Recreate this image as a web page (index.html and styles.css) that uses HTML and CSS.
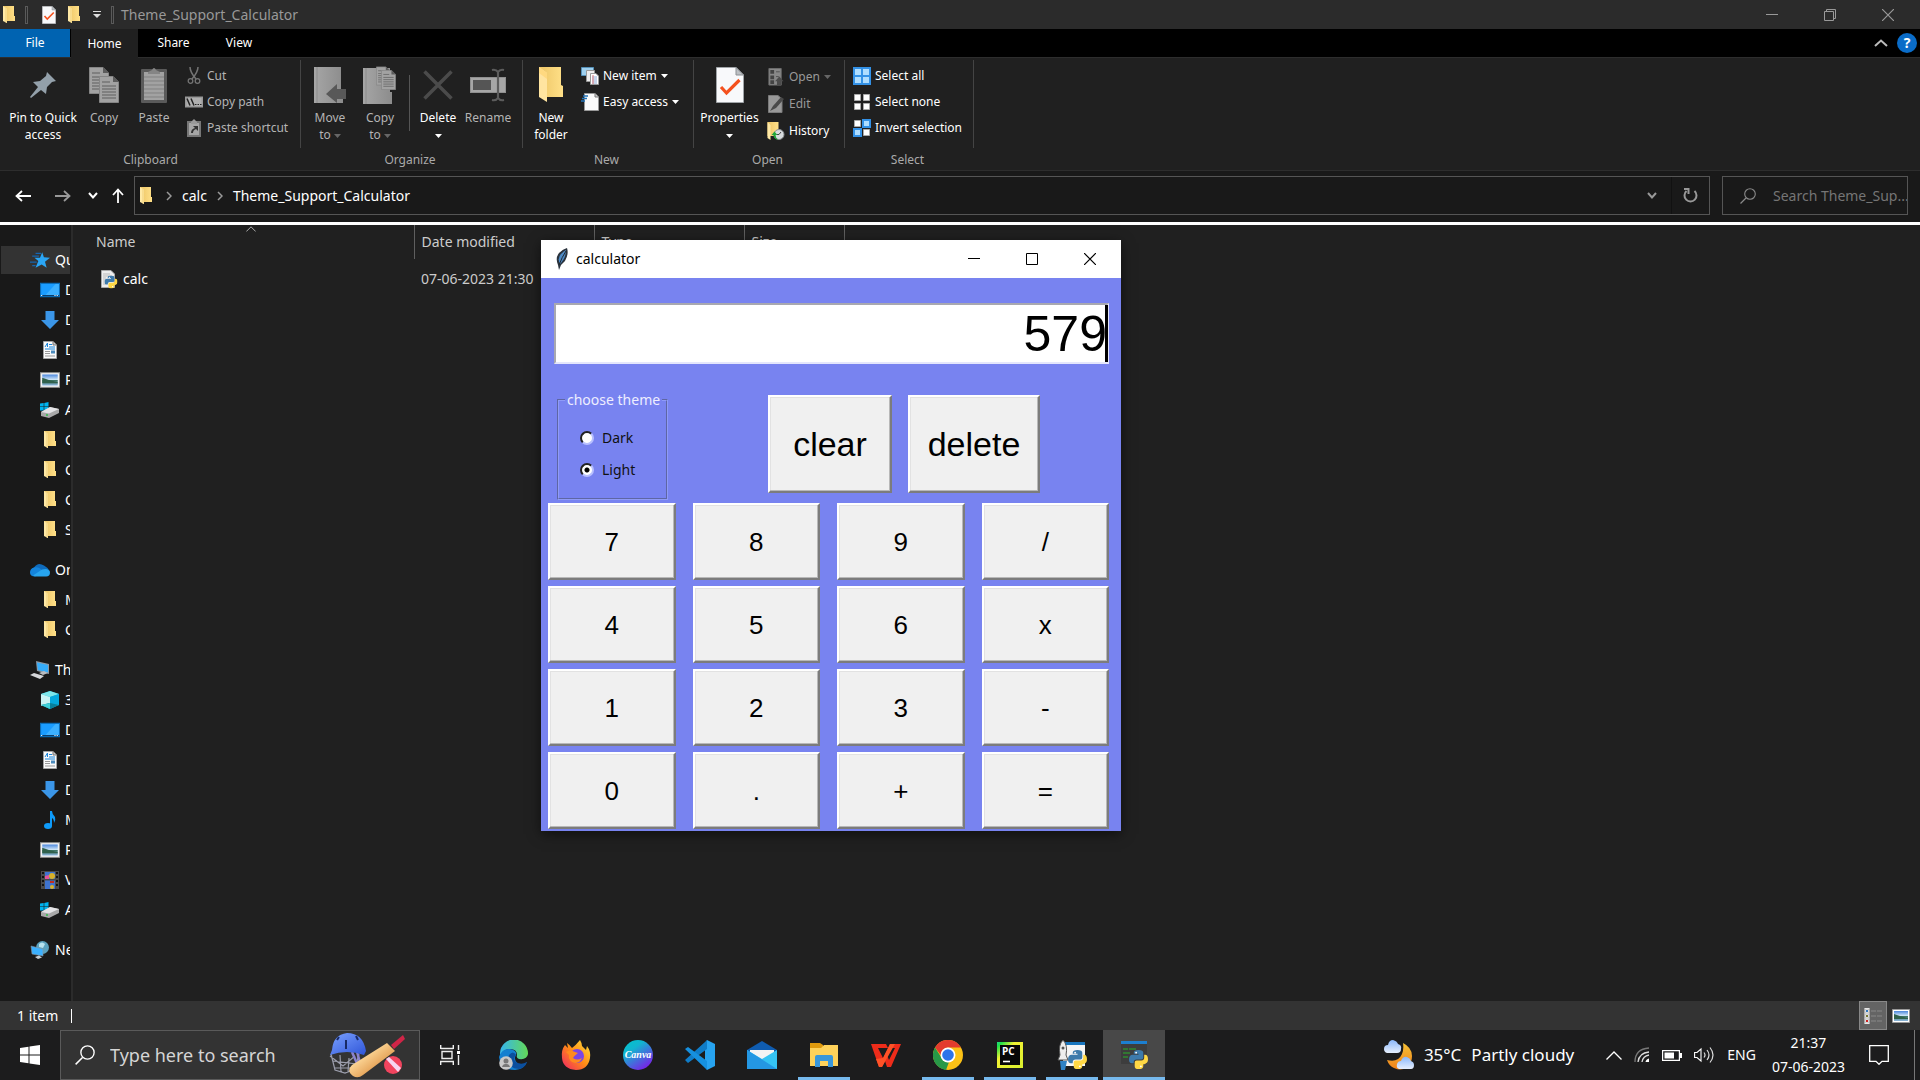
FILE: index.html
```html
<!DOCTYPE html>
<html lang="en">
<head>
<meta charset="utf-8">
<title>Theme_Support_Calculator</title>
<link rel="stylesheet" href="styles.css">
</head>
<body>
<svg class="sprite" aria-hidden="true">
  <defs>
    <linearGradient id="g-folder" x1="0" x2="1"><stop offset="0" stop-color="#edc566"/><stop offset="1" stop-color="#ffe088"/></linearGradient>
    <linearGradient id="g-sky" x1="0" y1="0" x2="0" y2="1"><stop offset="0" stop-color="#4a86dc"/><stop offset=".5" stop-color="#d8ecfa"/><stop offset=".5" stop-color="#37705c"/><stop offset="1" stop-color="#8fb8e0"/></linearGradient>
    <linearGradient id="g-grey" x1="0" x2="1"><stop offset="0" stop-color="#a6a6a6"/><stop offset="1" stop-color="#8c8c8c"/></linearGradient>
    <linearGradient id="g-canva" x1="0" y1="0" x2=".7" y2="1"><stop offset="0" stop-color="#00c4cc"/><stop offset=".35" stop-color="#11b5d0"/><stop offset="1" stop-color="#7a20e8"/></linearGradient>
    <linearGradient id="g-edge" x1="0" y1="0" x2="1" y2="0"><stop offset="0" stop-color="#35b5ef"/><stop offset="1" stop-color="#63d957"/></linearGradient>
    <linearGradient id="g-fox" x1="1" y1="0" x2="0" y2="1"><stop offset="0" stop-color="#ffe53c"/><stop offset=".5" stop-color="#ff8a16"/><stop offset="1" stop-color="#ef1e6b"/></linearGradient>
    <linearGradient id="g-moon" x1="0" y1="0" x2="0" y2="1"><stop offset="0" stop-color="#f6c237"/><stop offset="1" stop-color="#f08018"/></linearGradient>
    <linearGradient id="g-cloud" x1="0" y1="0" x2="0" y2="1"><stop offset="0" stop-color="#8bb8fb"/><stop offset="1" stop-color="#e6effd"/></linearGradient>
    <linearGradient id="g-pc" x1="0" y1="0" x2="1" y2="1"><stop offset="0" stop-color="#21d789"/><stop offset=".1" stop-color="#1ee04a"/><stop offset=".35" stop-color="#f2f233"/><stop offset="1" stop-color="#d8ef2f"/></linearGradient>
    <linearGradient id="g-helm" x1="0" y1="0" x2="1" y2="1"><stop offset="0" stop-color="#7ba2ff"/><stop offset="1" stop-color="#2f55d8"/></linearGradient>
    <linearGradient id="g-bat" x1="0" y1="0" x2="1" y2="1"><stop offset=".3" stop-color="#ffdc9e"/><stop offset=".8" stop-color="#d98a3a"/></linearGradient>
  </defs>
  <symbol id="folder" viewBox="0 0 12 18"><path d="M0 0H11V10H12V15H0Z" fill="url(#g-folder)"/><path d="M0 0L4 3V17L0 15Z" fill="#ffe9a6"/><path d="M2 1L4 3V17L2 16Z" fill="#f8dc8e"/></symbol>
  <symbol id="bigfolder" viewBox="0 0 24 36"><path d="M0 0H22V18L24 19V30H6Z" fill="url(#g-folder)"/><path d="M0 0L8 6V35L0 30Z" fill="#ffe4a0"/><path d="M0 0L8 6V12L0 6Z" fill="#ffd980"/></symbol>
  <symbol id="checkdoc" viewBox="0 0 28 36"><path d="M.5.5H20L27.500 8V35.500H.5Z" fill="#f8f9fb" stroke="#a0a4a8"/><path d="M20 .5V8H27.500Z" fill="#bcc0c4" stroke="#8c9094"/><path d="M5 20L10.500 26L23.500 13" fill="none" stroke="#f4511e" stroke-width="3.200"/></symbol>
  <symbol id="docgrey" viewBox="0 0 20 27"><path d="M.5.5H14L19.500 6V26.500H.5Z" fill="#a2a2a2" stroke="#858585"/><path d="M14 0V6H20" fill="#5c5c5c"/><path d="M3 6H11M3 10H17M3 13H17M3 16H17M3 19H17M3 22H17" stroke="#5f5f5f"/></symbol>
  <symbol id="copy" viewBox="0 0 30 36"><use href="#docgrey" width="20" height="27"/><use href="#docgrey" x="10" y="9" width="20" height="27"/></symbol>
  <symbol id="paste" viewBox="0 0 26 36"><rect y="2" width="26" height="34" rx="1" fill="#5a5a5a"/><path d="M3 5H23V33H3Z" fill="#a2a2a2"/><path d="M7 5L11 3Q13-1 15 3L19 5V7H7Z" fill="#858585"/><path d="M3 10H23M3 14H23M3 18H23M3 22H23M3 26H23M3 30H23" stroke="#818181"/></symbol>
  <symbol id="pin" viewBox="0 0 26 26"><path d="M17 0L26 9L22 10L17 15L16 22L11 18L1 26L0 25L8 15L3 10L10 9L16 4Z" fill="#93a0aa"/></symbol>
  <symbol id="cut" viewBox="0 0 14 18"><path d="M3 0Q3 5 9 12M11 0Q11 5 5 12" fill="none" stroke="#747474" stroke-width="1.500"/><circle cx="3.500" cy="14" r="2.300" fill="none" stroke="#747474" stroke-width="1.300"/><circle cx="10.500" cy="14" r="2.300" fill="none" stroke="#747474" stroke-width="1.300"/></symbol>
  <symbol id="path" viewBox="0 0 18 11"><path d="M0 0H18V11H0Z" fill="#999"/><path d="M1.500 1.500H16.500V9.500H1.500Z" fill="#b0b0b0"/><path d="M2 2L5 9M6 2L9 9" stroke="#222" stroke-width="1.500"/><path d="M10 8H11.500M12.500 8H14M15 8H16.500" stroke="#222"/></symbol>
  <symbol id="shortcut" viewBox="0 0 14 18"><path d="M0 2H14V18H0Z" fill="#777"/><path d="M2 4H12V16H2Z" fill="#a6a6a6"/><path d="M4 3L7 0L10 3V5H4Z" fill="#999"/><path d="M4 14Q4 10 8 9L6 7H11V12L9 10Q6 11 6 14Z" fill="#333"/></symbol>
  <symbol id="moveto" viewBox="0 0 32 36"><path d="M0 0H27V24H29V36H0Z" fill="url(#g-grey)"/><path d="M3 0V36" stroke="#8c8c8c"/><path d="M12 27L23 17V22H32V32H23V36Z" fill="#585858"/></symbol>
  <symbol id="copyto" viewBox="0 0 34 38"><path d="M0 2H27V26H29V38H0Z" fill="url(#g-grey)"/><path d="M3 2V38" stroke="#8c8c8c"/><use href="#docgrey" x="13" y="0" width="14" height="20"/><use href="#docgrey" x="18" y="4" width="15" height="20"/></symbol>
  <symbol id="delete" viewBox="0 0 30 30"><path d="M1.500 1.500L28.500 28.500M28.500 1.500L1.500 28.500" stroke="#4b4b4b" stroke-width="3.500"/></symbol>
  <symbol id="rename" viewBox="0 0 36 34"><path d="M0 9H36V25H0Z" fill="#8f8f8f"/><path d="M1 10H35V24H1Z" fill="#a6a6a6"/><path d="M3 12H21V22H3Z" fill="#555"/><path d="M22 2Q26 1 28 4Q30 1 34 2M28 4V30M22 32Q26 33 28 30Q30 33 34 32" fill="none" stroke="#5c5c5c" stroke-width="2.200"/></symbol>
  <symbol id="newitem" viewBox="0 0 18 18"><path d="M.5.5H12.500V8.500H.5Z" fill="#9fd0ee" stroke="#5590b8"/><path d="M5.500 3.500H13.500V14.500H5.500Z" fill="#eee" stroke="#999"/><path d="M9.500 6.500H15L17.500 9V17.500H9.500Z" fill="#fff" stroke="#999"/><path d="M11 10H16M11 12H16M11 14H16M11 16H16" stroke="#8eacd8"/><path d="M12 8V17" stroke="#e07a7a"/></symbol>
  <symbol id="easy" viewBox="0 0 18 18"><path d="M3.500 1V.5H14L17.500 4V17.500H3.500Z" fill="#fafafa" stroke="#999"/><path d="M14 .5V4H17.500" fill="#ccc" stroke="#777"/><path d="M2 3H7M1 5.500H6M0 8H4" stroke="#2273b8" stroke-width="1.400"/></symbol>
  <symbol id="open" viewBox="0 0 16 19"><path d="M.5.5H13.500V18H.5Z" fill="#888" stroke="#6d6d6d"/><path d="M2 2H6V6H2ZM2 8H6V12H2ZM2 13H6V17H2Z" fill="#444"/><path d="M8 4H12M8 9H11" stroke="#555"/><path d="M11.500 9L16 14H13.500V19H9V14H7Z" fill="#4c4c4c"/></symbol>
  <symbol id="edit" viewBox="0 0 16 18"><path d="M.5.5H10L14 4V17.500H.5Z" fill="#999" stroke="#7a7a7a"/><path d="M2 16L5 11L13 2L16 4L8 13Z" fill="#4a4a4a"/></symbol>
  <symbol id="history" viewBox="0 0 17 18"><path d="M0 0H11V14H0Z" fill="url(#g-folder)"/><path d="M0 0L3 3V18L0 16Z" fill="#ffe9a6"/><circle cx="11.500" cy="12.500" r="5" fill="#d8dcdf" stroke="#8a8f92"/><path d="M11.500 12.500L13.500 10M11.500 12.500H9.500" stroke="#444"/><path d="M4 13L7 9.500L10 13H8Q8 16 11 18Q6 17 6 13Z" fill="#22a83a"/></symbol>
  <symbol id="selall" viewBox="0 0 18 18"><path d="M0 0H18V18H0Z" fill="#3391e6"/><path d="M2 2H8V8H2ZM10 2H16V8H10ZM2 10H8V16H2ZM10 10H16V16H10Z" fill="#aeddff"/></symbol>
  <symbol id="selnone" viewBox="0 0 18 18"><path d="M1.500 1.500H7.500V7.500H1.500ZM10.500 1.500H16.500V7.500H10.500ZM1.500 10.500H7.500V16.500H1.500ZM10.500 10.500H16.500V16.500H10.500Z" fill="#fff" stroke="#aaa"/></symbol>
  <symbol id="selinv" viewBox="0 0 18 18"><path d="M1.500 1.500H7.500V7.500H1.500ZM10.500 10.500H16.500V16.500H10.500Z" fill="#fff" stroke="#aaa"/><path d="M10 1H17V8H10ZM1 10H8V17H1Z" fill="#aeddff" stroke="#3391e6" stroke-width="2"/></symbol>
  <symbol id="caret" viewBox="0 0 7 4"><path d="M0 0H7L3.500 4Z" fill="currentColor"/></symbol>
  <symbol id="qat" viewBox="0 0 8 7"><path d="M0 .5H8" stroke="#ddd"/><path d="M0 3H8L4 7Z" fill="#ddd"/></symbol>
  <symbol id="min" viewBox="0 0 12 12"><path d="M0 5.500H12" stroke="currentColor"/></symbol>
  <symbol id="restore" viewBox="0 0 12 12"><path d="M.5 2.500H9.500V11.500H.5ZM2.500 2.500V.5H11.500V9.500H9.500" fill="none" stroke="currentColor"/></symbol>
  <symbol id="max" viewBox="0 0 12 12"><path d="M.5.5H11.500V11.500H.5Z" fill="none" stroke="currentColor"/></symbol>
  <symbol id="close" viewBox="0 0 12 12"><path d="M0 0L12 12M12 0L0 12" stroke="currentColor" stroke-width="1.200"/></symbol>
  <symbol id="up2" viewBox="0 0 14 8"><path d="M1 7L7 1.500L13 7" fill="none" stroke="currentColor" stroke-width="2"/></symbol>
  <symbol id="thinup" viewBox="0 0 16 9"><path d="M.5 8.500L8 1L15.500 8.500" fill="none" stroke="currentColor" stroke-width="1.300"/></symbol>
  <symbol id="down" viewBox="0 0 10 7"><path d="M1 1L5 5.500L9 1" fill="none" stroke="currentColor" stroke-width="2"/></symbol>
  <symbol id="right" viewBox="0 0 6 10"><path d="M1 1L5 5L1 9" fill="none" stroke="currentColor" stroke-width="1.500"/></symbol>
  <symbol id="back" viewBox="0 0 16 12"><path d="M7 1L1.500 6L7 11M1.500 6H16" fill="none" stroke="currentColor" stroke-width="1.800"/></symbol>
  <symbol id="fwd" viewBox="0 0 16 12"><path d="M9 1L14.500 6L9 11M14.500 6H0" fill="none" stroke="currentColor" stroke-width="1.800"/></symbol>
  <symbol id="uparr" viewBox="0 0 12 15"><path d="M1 7L6 1.500L11 7M6 1.500V15" fill="none" stroke="currentColor" stroke-width="1.800"/></symbol>
  <symbol id="refresh" viewBox="0 0 15 15"><path d="M3.500 3A6 6 0 1 0 11.500 3M1 1H5.500V6" fill="none" stroke="currentColor" stroke-width="2"/></symbol>
  <symbol id="search" viewBox="0 0 16 16"><circle cx="10" cy="6" r="5.300" fill="none" stroke="currentColor" stroke-width="1.100"/><path d="M6 10L.5 15.500" stroke="currentColor" stroke-width="1.200"/></symbol>
  <symbol id="star" viewBox="0 0 18 16"><path d="M11 1L12.500 5.500L18 6L13.500 9.500L15 15L10.500 12L5 15L7.500 9L4 6H9Z" fill="#2ba6f5"/><path d="M5 2H10M2 4.500H8M0 10H6M2 13H5" stroke="#1565b0" stroke-width="1.100"/></symbol>
  <symbol id="desktop" viewBox="0 0 18 13"><path d="M.5.5H17.500V12.500H.5Z" fill="#1a9cff" stroke="#0b6db8"/><path d="M5 11L14 1H17V11Z" fill="#3cb0ff"/><path d="M1 11.500H17" stroke="#083c6a"/><path d="M1 11.500H2M13 11.500H14M15 11.500H16" stroke="#fff"/></symbol>
  <symbol id="download" viewBox="0 0 16 16"><path d="M4 0H12V8H16L8 16L0 8H4Z" fill="#3b96e8"/></symbol>
  <symbol id="docs" viewBox="0 0 14 18"><path d="M.5.5H10L13.500 4V17.500H.5Z" fill="#fafafa" stroke="#a3a3a3"/><path d="M10 .5V4H13.500" fill="#ccc" stroke="#777"/><path d="M2 6L4.500 2V6M6 3.500H9M6 6H12M2 8H12" stroke="#1b86dc" fill="none"/><path d="M2 10.500H7M2 12.500H7M2 15H12" stroke="#999"/><path d="M8 9.500H12V12.500H8Z" fill="#4b8bbd"/></symbol>
  <symbol id="pics" viewBox="0 0 18 14"><path d="M.5.5H17.500V13.500H.5Z" fill="#fff" stroke="#999"/><path d="M2 2H16V12H2Z" fill="url(#g-sky)"/><path d="M2 5Q7 7 16 9V10H2Z" fill="#30614c"/></symbol>
  <symbol id="drive" viewBox="0 0 20 16"><path d="M0 1.500L3.700 1V4.500H0ZM4.300 .9L8.500 0V4.500H4.300ZM0 5H3.700V8.500H0ZM4.300 5H8.500V9L4.300 8.600Z" fill="#00b4f0"/><path d="M1 10L10 5L19 7V11L9 16L1 14Z" fill="#a8a8a8"/><path d="M1 10L10 5L19 7L9 11.500Z" fill="#e4e4e6"/><circle cx="7" cy="13" r="1" fill="#2bbd47"/></symbol>
  <symbol id="cloud" viewBox="0 0 20 13"><path d="M2 11Q-1 6 4 4Q8-2 14 2Q18 4 20 8L16 12Z" fill="#0f6cbd"/><path d="M4 4Q9 3 12 7L5 13Q0 13 0 9Q0 5 4 4Z" fill="#1484dc"/><path d="M3 12L12 6Q19 4 20 9Q20 13 16 13H5Z" fill="#27a4ee"/></symbol>
  <symbol id="pc" viewBox="0 0 20 18"><path d="M6 0L19 3V13L7 10Z" fill="#8b98a4"/><path d="M7 1.500L18 4V11.500L8 9Z" fill="#35adfb"/><path d="M9 12L14 10L18 12L13 14Z" fill="#b8bcc0"/><path d="M0 14L4 12L14 15L10 18Z" fill="#d5d7da"/></symbol>
  <symbol id="cube" viewBox="0 0 18 18"><path d="M9 0L18 3V14L9 18L0 14V3Z" fill="#0fa9c5"/><path d="M0 3L9 0L18 3L9 6Z" fill="#7ce6ea"/><path d="M0 3L9 6V12L0 15Z" fill="#c8f3f4"/><path d="M9 6L18 3V14L9 12Z" fill="#05a8dc"/><path d="M0 14L9 12L18 14L9 18Z" fill="#087f9b"/><path d="M0 14L9 12V18Z" fill="#3ed0d8"/></symbol>
  <symbol id="music" viewBox="0 0 12 18"><ellipse cx="4" cy="15" rx="4" ry="3" fill="#0e9bfa"/><path d="M6 0H8Q8 3 11 6Q12 9 10 12Q10 8 8 7V15H6Z" fill="#0e9bfa"/></symbol>
  <symbol id="video" viewBox="0 0 18 18"><path d="M0 0H18V18H0Z" fill="#4a4a4a"/><path d="M1 1H3V3H1ZM1 5H3V7H1ZM1 9H3V11H1ZM1 13H3V15H1ZM15 1H17V3H15ZM15 5H17V7H15ZM15 9H17V11H15ZM15 13H17V15H15Z" fill="#111"/><path d="M4 1H14V8H4ZM4 9.500H14V18H4Z" fill="#3f74cf"/><circle cx="11" cy="5" r="3" fill="#d8b22a"/><path d="M4 5L8 4V8H4Z" fill="#e5539a"/><path d="M9 10H13V12H9Z" fill="#c42c20"/><circle cx="11" cy="16" r="2" fill="#d8b22a"/></symbol>
  <symbol id="net" viewBox="0 0 18 18"><circle cx="11.500" cy="6.500" r="6.500" fill="#5ba1bd"/><path d="M8 3Q11 0 14 3L12 7L8 6Z" fill="#b8e2ee"/><path d="M0 5L12 8V15L1 13Z" fill="#3bb0ff" stroke="#8894a0" stroke-width=".6"/><path d="M4 16L8 14.500L11 16.500L7 18Z" fill="#c5ccd2"/></symbol>
  <symbol id="python" viewBox="0 0 20 20"><path d="M10 0Q15 0 15 3V8Q15 10 13 10H8Q5 10 5 13V14H3Q0 14 0 10Q0 5 4 5H10V4H5V3Q5 0 10 0Z" fill="#3d7aab"/><path d="M10 20Q15 20 15 17V14H10V15H16Q20 14 20 10Q20 5 17 5H16V8Q16 11 13 11H8Q6 11 6 13V17Q6 20 10 20Z" fill="#ffd845"/><circle cx="7.500" cy="2.800" r="1" fill="#fff"/><circle cx="12.500" cy="17.200" r="1" fill="#fff"/></symbol>
  <symbol id="pyfile" viewBox="0 0 17 19"><path d="M.5.5H10L13.500 4V17.500H.5Z" fill="#eee" stroke="#aaa"/><path d="M2 4H9M2 6H11M2 8H5M2 10H4M2 12H4M2 14H5" stroke="#bbb"/><use href="#python" x="3.500" y="5.500" width="13" height="13"/></symbol>
  <symbol id="quill" viewBox="0 0 14 22"><path d="M12 0Q14 6 10 13L6 17L4 22L3 17Q0 10 4 5Q8 1 12 0Z" fill="#2a323c"/><path d="M11 2Q11 10 5 16Q2 10 6 6Q9 3 11 2Z" fill="#4c8ac6"/><path d="M11 3Q7 9 4 17" stroke="#20262e" fill="none"/></symbol>
  <symbol id="details" viewBox="0 0 18 16"><path d="M.5 0H5.500V16H.5Z" fill="#fff"/><path d="M1 1H5V5H1ZM1 6H5V10H1ZM1 11H5V15H1Z" fill="#eee" stroke="#999" stroke-width=".5"/><path d="M2 2H4V4H2Z" fill="#37b"/><path d="M2 7H4V9H2Z" fill="#773"/><path d="M2 12H4V14H2Z" fill="#c22"/><path d="M7 3H12M13 3H18M7 8H12M13 8H18M7 13H12M13 13H18" stroke="#888"/></symbol>
  <symbol id="win" viewBox="0 0 20 20"><path d="M0 3L8.500 1.800V9.500H0ZM9.500 1.600L20 0V9.500H9.500ZM0 10.500H8.500V18.200L0 17ZM9.500 10.500H20V20L9.500 18.400Z" fill="#fff"/></symbol>
  <symbol id="taskview" viewBox="0 0 20 20"><path d="M.7 0V4M.7 3.500H13.300M13.300 4V0M2 6.500H12V13.500H2ZM.7 20V16.500H13.300V20" fill="none" stroke="#eee" stroke-width="1.400"/><path d="M18.500 0V5M18.500 10V20" stroke="#eee" stroke-width="1.400"/><path d="M17 6H20V9H17Z" fill="#fff"/></symbol>
  <symbol id="cricket" viewBox="0 0 78 46"><path d="M2 22L6 38L16 41L26 37L30 22M4 29L28 32M6 36H26M11 23L12 40M20 26L19 40M1 24L14 34L26 24" fill="none" stroke="#9b9dab" stroke-width="1.200"/><path d="M27 16L33 38M23 20L30 36" stroke="#8b83cf" stroke-width="2.500"/><path d="M3 18Q4 3 18 1Q34 1 37 19L35 23Q18 17 1 23Z" fill="url(#g-helm)"/><path d="M17 8V17M8 8L10 5M27 4L29 8" stroke="#182a66" stroke-width="2"/><path d="M62 13L74 3L76 7L65 17Z" fill="#cf2547"/><path d="M58 11L66 19L34 43Q29 47 24 44Q17 39 23 33Z" fill="url(#g-bat)"/><circle cx="64" cy="33" r="9" fill="#f1445e"/><path d="M57 27L69 40L72 36L60 25Z" fill="#f6d7f2"/></symbol>
  <symbol id="edge" viewBox="0 0 30 30"><path d="M1 13A14 14 0 0 1 29 14Q28 20 20 19Q17 18 18 15Q18 9 11 9Q4 9 1 16Z" fill="url(#g-edge)"/><path d="M0 17Q3 8 11 9Q18 10 17 15Q14 20 19 24Q23 27 28 22Q25 29 16 30Q1 30 0 17Z" fill="#137fd0"/><path d="M10 15Q6 28 20 29Q26 28 28 22Q21 26 16 21Q14 18 17 15Q14 10 10 15Z" fill="#0b4f9e"/><circle cx="7" cy="23" r="6.800" fill="#c9c9c9"/><circle cx="7" cy="21" r="2.500" fill="#777"/><path d="M3 27Q4 23.500 7 24Q10 23.500 11 27Z" fill="#777"/></symbol>
  <symbol id="firefox" viewBox="0 0 30 30"><path d="M19 0Q21 3 21 6L25 10L26 6Q30 11 29 18Q27 30 15 30Q2 29 1 18Q0 10 4 5L7 8L6 3Q9 5 11 8Q15 5 19 0Z" fill="url(#g-fox)"/><circle cx="16" cy="16" r="7" fill="#7a45e5"/><path d="M5 12Q9 9 14 12L17 13Q13 16 12 18Q16 21 21 18Q18 25 11 22Q7 19 8 15Z" fill="#ff8a1f"/></symbol>
  <symbol id="vscode" viewBox="0 0 30 30"><path d="M22 0L30 4V26L22 30L20 25V5Z" fill="#27a3f0"/><path d="M0 20L20 2L22 0V9L3 23Z" fill="#0f7cc8"/><path d="M0 9L3 7L22 21V30L20 28Z" fill="#1690df"/></symbol>
  <symbol id="mail" viewBox="0 0 30 30"><path d="M0 10L15 1L30 10V18H0Z" fill="#0f5cb0"/><path d="M3 10H27V18L15 22L3 18Z" fill="#f4f4f4"/><path d="M0 10L15 19L30 10V29H0Z" fill="#35c3f3"/><path d="M0 10L30 29H0Z" fill="#2497e3"/></symbol>
  <symbol id="explorer" viewBox="0 0 30 30"><path d="M1 3H11L14 5V9H1Z" fill="#e09a0d"/><path d="M1 8H12L15 5H29V26H1Z" fill="#ffd25a"/><path d="M6 27V17Q6 15 8 15H22Q24 15 24 17V27H19V21H11V27Z" fill="#3a97da"/></symbol>
  <symbol id="wps" viewBox="0 0 30 30"><path d="M0 4H15L17 8H7L12 18L19 4H30L20 27H16L14 21L11 27H8ZM19 8L16 15L18 20L24 8Z" fill="#ee2c1a"/><path d="M12 18L19 4H24L11 27H8L5 19Z" fill="#ff5227"/></symbol>
  <symbol id="chrome" viewBox="0 0 30 30"><circle cx="15" cy="15" r="15" fill="#fbc116"/><path d="M2 7.500A15 15 0 0 1 28 7.500H15Q9 8 8.500 16Z" fill="#e33b2e"/><path d="M2 7.500L9 18.500Q12 23 16 22L13 30A15 15 0 0 1 2 7.500Z" fill="#279847"/><circle cx="15" cy="15" r="7.500" fill="#fff"/><circle cx="15" cy="15" r="5.800" fill="#2d73ea"/></symbol>
  <symbol id="pyl" viewBox="0 0 30 30"><path d="M6 3H28V26H6Z" fill="#f5f5f5"/><path d="M6 2H28V5H6Z" fill="#1875bd"/><path d="M6 0Q11 5 9 15L11 20H1L3 15Q1 5 6 0Z" fill="#eee" stroke="#555"/><path d="M3 21H10L8 30H4Z" fill="#2f82c6"/><circle cx="6" cy="8" r="1.500" fill="#555"/><use href="#python" x="11" y="10" width="19" height="19"/></symbol>
  <symbol id="pyw" viewBox="0 0 30 30"><path d="M2 2H28V24H2Z" fill="#3d3d3d"/><path d="M2 1H28V4H2Z" fill="#1c7fd0"/><path d="M4 9H9M10 9H17M4 13H11M4 17H9" stroke="#2f8a2f" stroke-width="1.500"/><use href="#python" x="10" y="10" width="19" height="19"/></symbol>
  <symbol id="weather" viewBox="0 0 30 30"><path d="M19 3Q31 9 27 22Q21 33 10 28Q5 26 3 20Q14 23 18 14Q20 9 19 3Z" fill="url(#g-moon)"/><path d="M3 13Q0 12 0 9Q0 5 4 5Q5 0 9 0Q13 1 14 4Q18 5 17 9Q17 13 13 13Z" fill="url(#g-cloud)"/><path d="M15 29Q12 28 13 24Q14 21 17 21Q19 16 23 17Q26 18 27 21Q30 22 30 25Q30 29 27 29Z" fill="url(#g-cloud)"/></symbol>
  <symbol id="wifi" viewBox="0 0 16 16"><path d="M1 15Q1 2 15 1" fill="none" stroke="#777" stroke-width="1.300"/><path d="M4 15Q5 6 15 5M8 15Q9 9 15 8" fill="none" stroke="#ddd" stroke-width="1.300"/><path d="M11.500 15Q12 12 15 11.500V15Z" fill="#fff"/></symbol>
  <symbol id="battery" viewBox="0 0 20 11"><path d="M.6.6H17.400V10.400H.6Z" fill="none" stroke="#fff" stroke-width="1.200"/><path d="M2.500 2.500H12V8.500H2.500Z" fill="#fff"/><path d="M18 3H20V8H18Z" fill="#fff"/></symbol>
  <symbol id="speaker" viewBox="0 0 21 18"><path d="M.6 6.500H3L7 3V15L3 11.500H.6Z" fill="none" stroke="#fff" stroke-width="1.100"/><path d="M10 6.500Q12 9 10 11.500M13 4Q17 9 13 14M16 1.500Q22 9 16 16.500" fill="none" stroke="#ddd" stroke-width="1.200"/></symbol>
  <symbol id="notif" viewBox="0 0 20 20"><path d="M.7.700H19.300V16.300H13L10 19.300L7 16.300H.7Z" fill="none" stroke="#fff" stroke-width="1.300"/></symbol>
</svg>

<div class="desktop">
  <header class="titlebar">
    <svg class="i-folder"><use href="#folder"/></svg>
    <span class="sep"></span>
    <button class="bare" aria-label="Properties"><svg class="i-doc"><use href="#checkdoc"/></svg></button>
    <button class="bare" aria-label="New folder"><svg class="i-folder"><use href="#folder"/></svg></button>
    <button class="bare qat" aria-label="Customize toolbar"><svg class="i-qat"><use href="#qat"/></svg></button>
    <span class="sep"></span>
    <span class="title">Theme_Support_Calculator</span>
    <div class="winctl">
      <button aria-label="Minimize"><svg><use href="#min"/></svg></button>
      <button aria-label="Restore"><svg><use href="#restore"/></svg></button>
      <button aria-label="Close"><svg><use href="#close"/></svg></button>
    </div>
  </header>

  <nav class="tabs">
    <button class="tab file">File</button>
    <button class="tab on">Home</button>
    <button class="tab share">Share</button>
    <button class="tab view">View</button>
    <div class="tabs-end">
      <button class="bare" aria-label="Collapse ribbon"><svg class="i-up2"><use href="#up2"/></svg></button>
      <button class="help" aria-label="Help">?</button>
    </div>
  </nav>

  <section class="ribbon">
    <div class="group g-clip">
      <div class="tools">
        <button class="big w-pin on"><span class="pic"><svg class="s26"><use href="#pin"/></svg></span><span>Pin to Quick<br>access</span></button>
        <button class="big w-copy"><span class="pic"><svg class="s30x36"><use href="#copy"/></svg></span><span>Copy</span></button>
        <button class="big w-paste"><span class="pic"><svg class="s26x36"><use href="#paste"/></svg></span><span>Paste</span></button>
        <div class="smalls">
          <button class="small"><svg><use href="#cut"/></svg>Cut</button>
          <button class="small"><svg><use href="#path"/></svg>Copy path</button>
          <button class="small"><svg><use href="#shortcut"/></svg>Paste shortcut</button>
        </div>
      </div>
      <div class="gname">Clipboard</div>
    </div>
    <div class="group g-org">
      <div class="tools">
        <button class="big w-move"><span class="pic"><svg class="s32x36"><use href="#moveto"/></svg></span><span>Move<br>to <svg class="i-caret"><use href="#caret"/></svg></span></button>
        <button class="big w-move"><span class="pic"><svg class="s34x38"><use href="#copyto"/></svg></span><span>Copy<br>to <svg class="i-caret"><use href="#caret"/></svg></span></button>
        <span class="rule"></span>
        <button class="big w-del on"><span class="pic"><svg class="s30"><use href="#delete"/></svg></span><span>Delete<br><svg class="i-caret"><use href="#caret"/></svg></span></button>
        <button class="big w-ren"><span class="pic"><svg class="s36x34"><use href="#rename"/></svg></span><span>Rename</span></button>
      </div>
      <div class="gname">Organize</div>
    </div>
    <div class="group g-new">
      <div class="tools">
        <button class="big w-nf on"><span class="pic"><svg class="s24x36"><use href="#bigfolder"/></svg></span><span>New<br>folder</span></button>
        <div class="smalls on">
          <button class="small"><svg><use href="#newitem"/></svg>New item <svg class="i-caret"><use href="#caret"/></svg></button>
          <button class="small"><svg><use href="#easy"/></svg>Easy access <svg class="i-caret"><use href="#caret"/></svg></button>
        </div>
      </div>
      <div class="gname">New</div>
    </div>
    <div class="group g-open">
      <div class="tools">
        <button class="big w-prop on"><span class="pic"><svg class="s28x36"><use href="#checkdoc"/></svg></span><span>Properties<br><svg class="i-caret"><use href="#caret"/></svg></span></button>
        <div class="smalls low">
          <button class="small dim"><svg><use href="#open"/></svg>Open <svg class="i-caret"><use href="#caret"/></svg></button>
          <button class="small dim"><svg><use href="#edit"/></svg>Edit</button>
          <button class="small on"><svg><use href="#history"/></svg>History</button>
        </div>
      </div>
      <div class="gname">Open</div>
    </div>
    <div class="group g-sel">
      <div class="tools">
        <div class="smalls on">
          <button class="small"><svg><use href="#selall"/></svg>Select all</button>
          <button class="small"><svg><use href="#selnone"/></svg>Select none</button>
          <button class="small"><svg><use href="#selinv"/></svg>Invert selection</button>
        </div>
      </div>
      <div class="gname">Select</div>
    </div>
  </section>

  <div class="address">
    <div class="navs">
      <button class="bare" aria-label="Back"><svg class="s16x12"><use href="#back"/></svg></button>
      <button class="bare off" aria-label="Forward"><svg class="s16x12"><use href="#fwd"/></svg></button>
      <button class="bare" aria-label="Recent"><svg class="s10x7"><use href="#down"/></svg></button>
      <button class="bare up" aria-label="Up"><svg class="s12x15"><use href="#uparr"/></svg></button>
    </div>
    <div class="crumbs">
      <svg class="i-folder"><use href="#folder"/></svg>
      <svg class="i-right"><use href="#right"/></svg>
      <a href="#">calc</a>
      <svg class="i-right"><use href="#right"/></svg>
      <a href="#">Theme_Support_Calculator</a>
      <div class="crumb-end">
        <button class="bare off" aria-label="Previous locations"><svg class="s10x7"><use href="#down"/></svg></button>
        <button class="bare off reload" aria-label="Refresh"><svg class="s15"><use href="#refresh"/></svg></button>
      </div>
    </div>
    <label class="find"><svg class="s16"><use href="#search"/></svg><input type="text" placeholder="Search Theme_Sup..." aria-label="Search folder"></label>
  </div>

  <main class="content">
    <nav class="side">
      <a class="row top sel" href="#"><svg><use href="#star"/></svg>Quick access</a>
      <a class="row" href="#"><svg><use href="#desktop"/></svg>Desktop</a>
      <a class="row" href="#"><svg><use href="#download"/></svg>Downloads</a>
      <a class="row" href="#"><svg><use href="#docs"/></svg>Documents</a>
      <a class="row" href="#"><svg><use href="#pics"/></svg>Pictures</a>
      <a class="row" href="#"><svg><use href="#drive"/></svg>A</a>
      <a class="row" href="#"><svg><use href="#folder"/></svg>C</a>
      <a class="row" href="#"><svg><use href="#folder"/></svg>C</a>
      <a class="row" href="#"><svg><use href="#folder"/></svg>C</a>
      <a class="row" href="#"><svg><use href="#folder"/></svg>S</a>
      <a class="row top" href="#"><svg><use href="#cloud"/></svg>OneDrive</a>
      <a class="row" href="#"><svg><use href="#folder"/></svg>M</a>
      <a class="row" href="#"><svg><use href="#folder"/></svg>C</a>
      <a class="row top" href="#"><svg><use href="#pc"/></svg>This PC</a>
      <a class="row" href="#"><svg><use href="#cube"/></svg>3D Objects</a>
      <a class="row" href="#"><svg><use href="#desktop"/></svg>Desktop</a>
      <a class="row" href="#"><svg><use href="#docs"/></svg>Documents</a>
      <a class="row" href="#"><svg><use href="#download"/></svg>Downloads</a>
      <a class="row" href="#"><svg><use href="#music"/></svg>Music</a>
      <a class="row" href="#"><svg><use href="#pics"/></svg>Pictures</a>
      <a class="row" href="#"><svg><use href="#video"/></svg>Videos</a>
      <a class="row" href="#"><svg><use href="#drive"/></svg>A</a>
      <a class="row top" href="#"><svg><use href="#net"/></svg>Network</a>
    </nav>
    <div class="files">
      <table>
        <colgroup><col class="c-name"><col class="c-date"><col class="c-type"><col class="c-size"><col></colgroup>
        <thead><tr><th class="name">Name<svg class="sort"><use href="#thinup"/></svg></th><th>Date modified</th><th>Type</th><th>Size</th><th class="rest"></th></tr></thead>
        <tbody><tr><td class="name"><span class="fname"><svg class="i-py"><use href="#pyfile"/></svg>calc</span></td><td>07-06-2023 21:30</td><td></td><td></td><td></td></tr></tbody>
      </table>
    </div>
  </main>

  <footer class="status">
    <span class="count">1 item</span>
    <div class="views">
      <button class="vbtn on" aria-label="Details"><svg class="s18x16"><use href="#details"/></svg></button>
      <button class="vbtn" aria-label="Thumbnails"><svg class="s18x14"><use href="#pics"/></svg></button>
    </div>
  </footer>

  <div class="taskbar">
    <button class="start" aria-label="Start"><svg class="s20"><use href="#win"/></svg></button>
    <label class="tsearch"><svg class="s20"><use href="#search"/></svg><input type="text" placeholder="Type here to search" aria-label="Search"><svg class="i-cricket"><use href="#cricket"/></svg></label>
    <button class="task tv" aria-label="Task view"><svg class="s20"><use href="#taskview"/></svg></button>
    <button class="task" aria-label="Edge"><svg><use href="#edge"/></svg></button>
    <button class="task" aria-label="Firefox"><svg><use href="#firefox"/></svg></button>
    <button class="task" aria-label="Canva"><svg viewBox="0 0 30 30"><circle cx="15" cy="15" r="15" fill="url(#g-canva)"/><text class="canva-name" x="15" y="18" text-anchor="middle">Canva</text></svg></button>
    <button class="task" aria-label="VS Code"><svg><use href="#vscode"/></svg></button>
    <button class="task" aria-label="Mail"><svg><use href="#mail"/></svg></button>
    <button class="task run" aria-label="File Explorer"><svg><use href="#explorer"/></svg></button>
    <button class="task" aria-label="WPS Office"><svg><use href="#wps"/></svg></button>
    <button class="task run" aria-label="Chrome"><svg><use href="#chrome"/></svg></button>
    <button class="task run" aria-label="PyCharm"><svg viewBox="0 0 30 30"><path d="M2 2H28V28H2Z" fill="url(#g-pc)"/><path d="M5 5H25V25H5Z" fill="#080808"/><text class="pc-name" x="7" y="15">PC</text><path d="M8 21.500H15" stroke="#fff" stroke-width="1.600"/></svg></button>
    <button class="task run" aria-label="Python launcher"><svg><use href="#pyl"/></svg></button>
    <button class="task cur" aria-label="Python"><svg><use href="#pyw"/></svg></button>
    <div class="tray">
      <button class="bare weather"><svg class="s30"><use href="#weather"/></svg><span>35°C</span><span>Partly cloudy</span></button>
      <button class="bare" aria-label="Hidden icons"><svg class="s16x9"><use href="#thinup"/></svg></button>
      <button class="bare" aria-label="Network"><svg class="s16"><use href="#wifi"/></svg></button>
      <button class="bare" aria-label="Battery"><svg class="s20x11"><use href="#battery"/></svg></button>
      <button class="bare" aria-label="Volume"><svg class="s21x18"><use href="#speaker"/></svg></button>
      <button class="bare">ENG</button>
      <button class="bare clock">21:37<br>07-06-2023</button>
      <button class="bare notif" aria-label="Notifications"><svg class="s20"><use href="#notif"/></svg></button>
    </div>
  </div>

  <section class="calc" aria-label="calculator">
    <header class="calc-title">
      <svg class="i-quill"><use href="#quill"/></svg>
      <span>calculator</span>
      <div class="winctl">
        <button aria-label="Minimize"><svg><use href="#min"/></svg></button>
        <button aria-label="Maximize"><svg><use href="#max"/></svg></button>
        <button aria-label="Close"><svg><use href="#close"/></svg></button>
      </div>
    </header>
    <div class="calc-body">
      <div class="entry"><input type="text" value="579" aria-label="Result"><span class="cursor"></span></div>
      <div class="mid">
        <fieldset>
          <legend>choose theme</legend>
          <label><input type="radio" name="theme">Dark</label>
          <label><input type="radio" name="theme" checked>Light</label>
        </fieldset>
        <button class="key clear">clear</button>
        <button class="key del">delete</button>
      </div>
      <div class="keys">
        <button class="key">7</button><button class="key">8</button><button class="key">9</button><button class="key">/</button>
        <button class="key">4</button><button class="key">5</button><button class="key">6</button><button class="key">x</button>
        <button class="key">1</button><button class="key">2</button><button class="key">3</button><button class="key">-</button>
        <button class="key">0</button><button class="key">.</button><button class="key">+</button><button class="key">=</button>
      </div>
    </div>
  </section>
</div>
</body>
</html>
```
FILE: styles.css
```css
* { box-sizing: border-box; }
body { margin: 0; background: #202020; color: #fff; font: 14px/20px "Noto Sans", "Open Sans", sans-serif; }
button, input { font: inherit; color: inherit; }
button { border: 0; padding: 0; background: none; }
a { color: inherit; text-decoration: none; }
svg { display: block; flex: none; }
.sprite { position: absolute; width: 0; height: 0; }
.desktop { position: relative; display: flex; flex-direction: column; min-height: 100vh; overflow: hidden; }
.bare { display: flex; align-items: center; justify-content: center; }

.s15 { width: 15px; height: 15px; }
.s16 { width: 16px; height: 16px; }
.s20 { width: 20px; height: 20px; }
.s26 { width: 26px; height: 26px; }
.s30 { width: 30px; height: 30px; }
.s10x7 { width: 10px; height: 7px; }
.s12x15 { width: 12px; height: 15px; }
.s16x9 { width: 16px; height: 9px; }
.s16x12 { width: 16px; height: 12px; }
.s18x14 { width: 18px; height: 14px; }
.s18x16 { width: 18px; height: 16px; }
.s20x11 { width: 20px; height: 11px; }
.s21x18 { width: 21px; height: 18px; }
.s24x36 { width: 24px; height: 36px; }
.s26x36 { width: 26px; height: 36px; }
.s28x36 { width: 28px; height: 36px; }
.s30x36 { width: 30px; height: 36px; }
.s32x36 { width: 32px; height: 36px; }
.s34x38 { width: 34px; height: 38px; }
.s36x34 { width: 36px; height: 34px; }
.i-folder { width: 12px; height: 18px; }
.i-doc { width: 14px; height: 18px; }
.i-qat { width: 8px; height: 7px; }
.i-up2 { width: 14px; height: 8px; }
.i-right { width: 6px; height: 10px; color: #9a9a9a; }
.i-caret { display: inline-block; width: 7px; height: 4px; vertical-align: middle; }

/* Title bar */
.titlebar { display: flex; align-items: center; height: 29px; padding-left: 3px; background: #2b2b2b; }
.titlebar .sep { width: 3px; height: 18px; border: 1px solid #5a5a5a; margin: 0 10px; }
.titlebar .i-doc { margin: 0 12px 0 4px; }
.titlebar .qat { margin-left: 13px; }
.title { color: #999; margin-left: -3px; }
.winctl { display: flex; align-self: stretch; margin-left: auto; }
.winctl button { display: flex; align-items: center; justify-content: center; width: 58px; }
.winctl svg { width: 12px; height: 12px; }
.titlebar .winctl { color: #999; padding-right: 3px; }
.calc-title .winctl { padding-right: 2px; }

/* Ribbon tabs */
.tabs { display: flex; height: 29px; background: #000; border-bottom: 1px solid #2d2d2d; font-size: 12px; }
.tab { width: 67px; }
.tab.file { width: 70px; background: #0063b1; margin-right: 1px; }
.tab.on { background: #202020; height: 29px; }
.tab.share { width: 71px; }
.tab.view { width: 60px; }
.tabs-end { display: flex; align-items: center; gap: 9px; margin-left: auto; padding-right: 3px; color: #bbb; }
.help { width: 20px; height: 20px; border-radius: 50%; background: #0a6cc8; color: #fff; font-weight: 700; font-size: 14px; }

/* Ribbon */
.ribbon { display: flex; height: 113px; border-bottom: 1px solid #2d2d2d; color: #b4b4b4; font-size: 12px; line-height: 17px; }
.ribbon .on { color: #fff; }
.group { display: flex; flex-direction: column; }
.g-clip { width: 301px; }
.g-org { width: 222px; }
.g-new { width: 171px; }
.g-open { width: 151px; }
.g-sel { width: 129px; }
.tools { display: flex; height: 88px; margin-top: 2px; border-right: 1px solid #444; padding-left: 6px; }
.gname { text-align: center; margin-top: 3px; padding-right: 4px; color: #aaa; }
.g-clip .gname { padding-right: 0; }
.big { display: flex; flex-direction: column; align-items: center; white-space: nowrap; }
.pic { display: flex; align-items: center; justify-content: center; height: 38px; margin: 6px 0 5px; }
.w-pin { width: 76px; }
.w-copy { width: 46px; }
.w-paste { width: 54px; }
.w-move { width: 50px; }
.w-move .i-caret { color: #666; }
.w-del { width: 48px; margin-left: 4px; }
.w-ren { width: 52px; }
.w-nf { width: 46px; }
.w-prop { width: 61px; }
.rule { width: 1px; height: 56px; margin: 15px 0 0 4px; background: #555; }
.g-clip .tools { padding-left: 5px; }
.g-org .tools { padding-left: 4px; }
.g-new .tools { padding-left: 5px; }
.g-open .tools { padding-left: 5px; }
.smalls { display: flex; flex-direction: column; gap: 5px; padding: 5px 0 0 4px; }
.smalls.low { gap: 6px; padding-top: 6px; }
.small { display: flex; align-items: center; gap: 4px; height: 21px; white-space: nowrap; }
.small > svg:first-child { width: 18px; height: 18px; }
.g-open .smalls { padding-left: 7px; }
.g-new .smalls { padding-left: 7px; }
.g-sel .smalls { padding-left: 2px; }
.small.dim { color: #999; }
.dim .i-caret { color: #666; }

/* Address bar */
.address { display: flex; align-items: flex-start; gap: 12px; height: 51px; padding: 5px 12px 0 0; background: #191919; }
.navs { display: flex; align-items: center; gap: 17px; width: 122px; height: 39px; padding-left: 15px; }
.navs .off { margin-left: 7px; }
.navs .up { margin-left: -3px; }
.off { color: #999; }
.crumbs { display: flex; flex: 1; align-items: center; gap: 10px; height: 39px; padding-left: 5px; border: 1px solid #555; }
.crumbs .i-folder { margin-right: 4px; }
.crumb-end { display: flex; align-self: stretch; margin-left: auto; }
.crumb-end .bare { width: 38px; }
.crumb-end .reload { border-left: 1px solid #111; }
.find { display: flex; align-items: center; width: 186px; height: 39px; padding-left: 17px; gap: 17px; border: 1px solid #555; color: #8a8a8a; }
.find input { flex: 1; min-width: 0; border: 0; padding: 0; background: none; outline: 0; }
.find input::placeholder { color: #757575; }

/* Folder content */
.content { display: flex; flex: 1; border-top: 3px solid #fff; }
.side { width: 73px; border-right: 2px solid #2b2b2b; padding: 21px 1px 0 1px; background: #191919; }
.row { display: flex; align-items: center; gap: 5px; height: 28px; margin-bottom: 2px; padding-left: 39px; overflow: hidden; white-space: nowrap; }
.row svg { width: 20px; height: 18px; }
.row.top { padding-left: 29px; margin-top: 12px; }
.row.sel { background: #333; margin-top: 0; }
.files { flex: 1; }
table { width: 100%; table-layout: fixed; border-collapse: collapse; }
.c-name { width: 341px; }
.c-date { width: 180px; }
.c-type { width: 150px; }
.c-size { width: 100px; }
th { height: 34px; padding: 0 7px; border-right: 1px solid #5f5f5f; text-align: left; font-weight: 400; color: #ccc; }
th.rest { border: 0; }
th.name { position: relative; padding-left: 23px; }
.sort { position: absolute; top: 1px; left: 173px; width: 10px; height: 6px; }
td { height: 40px; padding: 0 7px; color: #ccc; white-space: nowrap; }
td.name { padding-left: 28px; color: #fff; }
.fname { display: flex; align-items: center; gap: 5px; }
.i-py { width: 17px; height: 19px; }

/* Status bar */
.status { display: flex; align-items: center; justify-content: space-between; height: 29px; padding-left: 17px; background: #333; }
.count { padding-right: 13px; border-right: 1px solid #fff; line-height: 14px; }
.views { display: flex; align-self: stretch; padding-right: 5px; }
.vbtn { display: flex; align-items: center; justify-content: center; width: 28px; border: 1px solid transparent; }
.vbtn.on { background: #646464; border-color: #888; }

/* Taskbar */
.taskbar { display: flex; height: 50px; background: #1c1c1d; }
.start { display: flex; align-items: center; justify-content: center; width: 60px; }
.tsearch { display: flex; align-items: center; width: 360px; padding: 0 12px 0 14px; gap: 15px; border: 1px solid #5a5a5a; background: #333; }
.tsearch input { flex: 1; min-width: 0; height: 30px; border: 0; padding: 0; background: none; outline: 0; font-size: 18px; }
.tsearch input::placeholder { color: #d5d5d5; }
.i-cricket { width: 78px; height: 46px; }
.task { display: flex; align-items: center; justify-content: center; width: 62px; border: solid transparent; border-width: 3px 5px; }
.task svg { width: 30px; height: 30px; }
.task.tv { width: 60px; margin-right: 3px; }
.task.tv svg { width: 20px; height: 20px; }
.task.run { border-width: 0 5px; background: linear-gradient(#76b9ed, #76b9ed) bottom / 100% 3px no-repeat padding-box; }
.task.cur { border: 0; background: linear-gradient(#76b9ed, #76b9ed) bottom / 100% 3px no-repeat #484848; }
.canva-name { font: italic 700 10px "Liberation Serif", serif; fill: #fff; }
.pc-name { font: 700 10px "Open Sans", sans-serif; fill: #fff; }
.tray { display: flex; align-items: center; gap: 12px; margin-left: auto; padding-right: 5px; }
.weather { gap: 10px; font-size: 17px; margin-right: 20px; }
.clock { margin-left: 4px; line-height: 24px; }
.notif { width: 71px; height: 50px; margin-left: -13px; border-right: 1px solid #777; }

/* Calculator window */
.calc { position: absolute; left: 541px; top: 240px; width: 580px; background: #7883f0; box-shadow: 0 3px 12px rgba(0, 0, 0, .55); color: #000; }
.calc-title { display: flex; align-items: center; height: 38px; padding-left: 14px; gap: 7px; background: #fff; }
.i-quill { width: 14px; height: 22px; }
.calc-body { padding: 25px 0 2px; }
.entry { position: relative; margin: 0 12px 0 13px; }
.entry input { display: block; width: 100%; height: 61px; padding: 0; border: 2px solid #e4e6fc; border-top-color: #a8a8b0; border-left-color: #a8a8b0; border-radius: 0; background: #fff; text-align: right; outline: 0; font: 50px/57px "Liberation Sans", Arial, sans-serif; }
.cursor { position: absolute; top: 2px; right: 1px; width: 3px; height: 57px; background: #000; }
.mid { display: flex; align-items: center; padding: 27px 0 3px 16px; }
fieldset { width: 111px; height: 109px; margin: 0 100px 0 0; padding: 13px 0 0 20px; border: 2px groove #8f9bf8; }
legend { margin-left: -14px; padding: 0 2px; color: #eef; line-height: 18px; white-space: nowrap; }
fieldset label { display: flex; align-items: center; gap: 8px; height: 32px; color: #111; }
fieldset input { appearance: none; width: 14px; height: 14px; margin: 0 0 0 1px; border: 2px solid; border-color: #222 #b8c0ff #b8c0ff #222; border-radius: 50%; background: #fff; }
fieldset input:checked { background: radial-gradient(circle, #000 2px, #fff 3px); }
.key { border: 2px solid; border-color: #fff #7c7c7c #7c7c7c #fff; background: #f0f0f0; box-shadow: inset -1px -1px #b8b8b8, inset 1px 1px #e2e2e2; font: 26px/30px "Liberation Sans", Arial, sans-serif; }
.clear, .del { height: 98px; margin-top: -4px; font-size: 34px; }
.clear { width: 124px; margin-right: 16px; }
.del { width: 132px; }
.keys { display: grid; grid-template-columns: repeat(4, 1fr); grid-auto-rows: 77px; gap: 6px 17px; padding: 0 12px 0 7px; }
```
